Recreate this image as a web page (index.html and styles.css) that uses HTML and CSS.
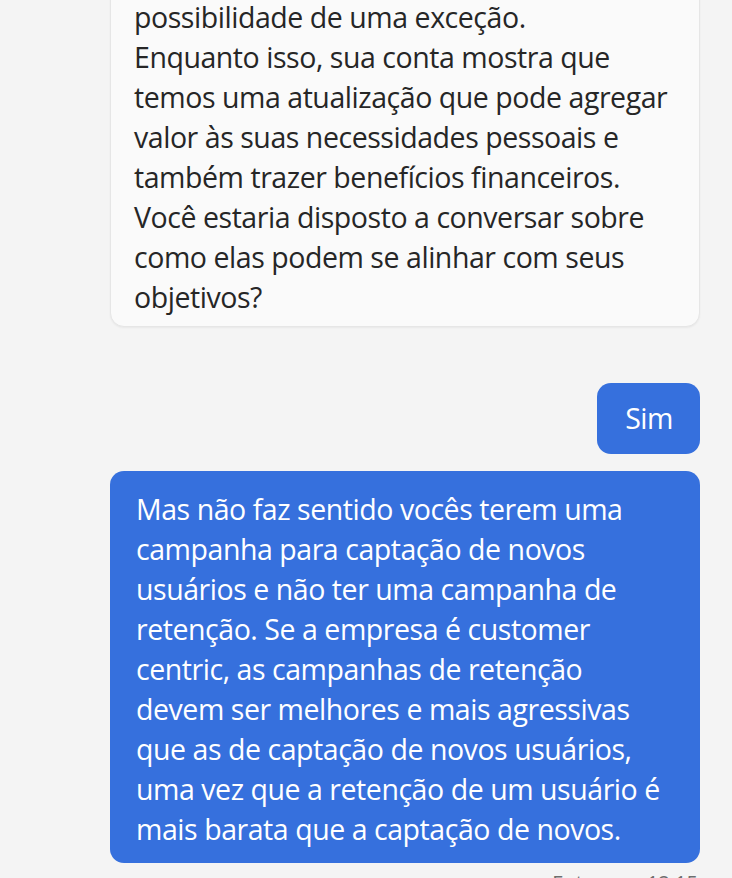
FILE: index.html
```html
<!DOCTYPE html>
<html lang="pt-BR">
  <head>
    <meta charset="UTF-8" />
    <title>Chat</title>
    <link rel="stylesheet" href="styles.css">
  </head>
  <body>
    <div class="chat">
      <div class="thread">
        <div class="msg msg-in">
          <p>possibilidade de uma exceção.<br>
          Enquanto isso, sua conta mostra que temos uma atualização que pode agregar valor às suas necessidades pessoais e também trazer benefícios financeiros. Você estaria disposto a conversar sobre como elas podem se alinhar com seus objetivos?</p>
        </div>

        <div class="msg msg-out msg-short">
          <p>Sim</p>
        </div>

        <div class="msg msg-out">
          <p>Mas não faz sentido vocês terem uma campanha para captação de novos usuários e não ter uma campanha de retenção. Se a empresa é customer centric, as campanhas de retenção devem ser melhores e mais agressivas que as de captação de novos usuários, uma vez que a retenção de um usuário é mais barata que a captação de novos.</p>
        </div>
        <div class="status">Entregue, 12:15</div>
      </div>
    </div>
  </body>
</html>
```

FILE: styles.css
```css
html,
body {
  margin: 0;
  height: 100%;
}
body {
  background-color: #f4f4f4;
  font-family: "Open Sans", "Noto Sans", Arial, sans-serif;
  overflow: hidden;
}
.chat {
  padding: 0 32px 0 110px;
}
/* list is scrolled, first bubble starts above the viewport */
.thread {
  display: flex;
  flex-direction: column;
  margin-top: -19px;
}
.msg {
  border-radius: 14px;
  box-sizing: border-box;
}
.msg p {
  margin: 0;
  font-size: 28.5px;
  line-height: 40px;
  letter-spacing: -0.45px;
}
.msg-in {
  background-color: #fafafa;
  color: #262626;
  border: 1px solid #e6e6e6;
  box-shadow: 0 1px 2px rgba(0, 0, 0, 0.05);
  padding: 15px 24px 9px 23px;
}
.msg-out {
  align-self: flex-end;
  background-color: #3670dd;
  color: #fff;
  padding: 18px 24px 14px 26px;
}
.msg-short {
  margin-top: 56px;
  margin-bottom: 17px;
  padding: 15px 27px 16px 28px;
}
.status {
  align-self: flex-end;
  margin-top: 6px;
  font-size: 20px;
  color: #6e6e6e;
  padding-right: 2px;
}
```
